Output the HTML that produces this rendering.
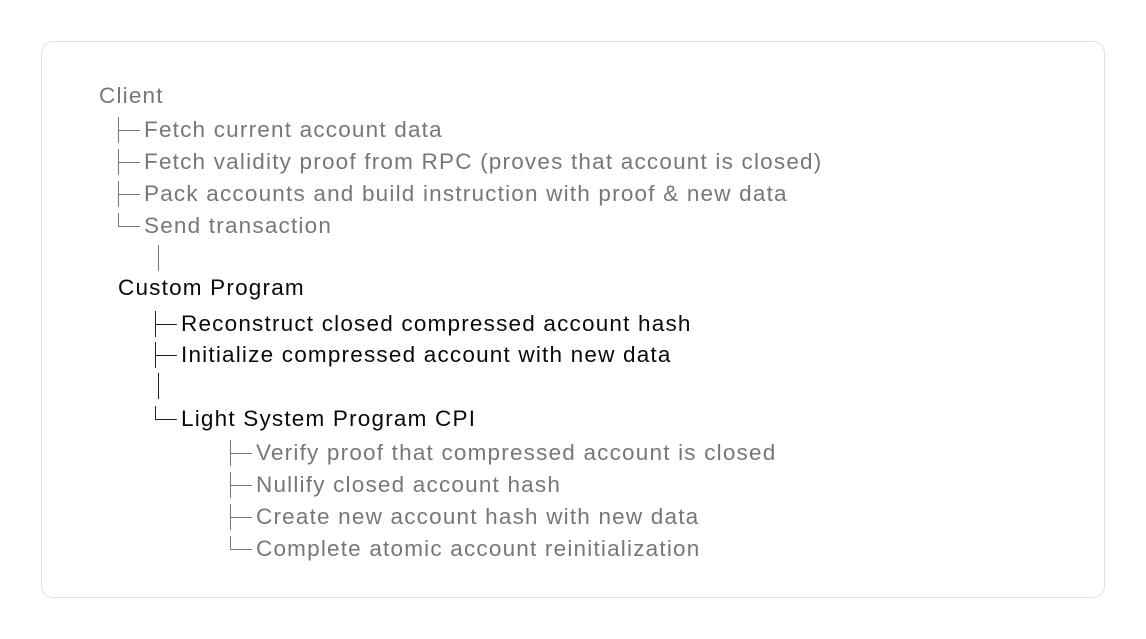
<!DOCTYPE html>
<html><head><meta charset="utf-8"><style>
html,body{margin:0;padding:0;background:#fff;width:1146px;height:639px;overflow:hidden}
.box{position:absolute;left:41px;top:41px;width:1062px;height:555px;border:1px solid #e2e2e2;border-radius:12px}
.r{position:absolute;height:32px;line-height:32px;font-family:"Liberation Sans",sans-serif;font-size:22.5px;letter-spacing:1.2px;white-space:nowrap;color:#777}
.k{color:#0a0a0a}
.g{position:absolute;width:20px;height:32px}
.g .v{position:absolute;left:0;top:3px;width:1.3px;height:26px;background:#777}
.g .h{position:absolute;left:0;top:15.5px;width:22px;height:1.3px;background:#777}
.g.l .v{height:13.5px}
.k .g .v,.k .g .h{background:#222}
</style></head><body>
<div class="box"></div>
<div class="r" style="left:99px;top:80px">Client</div>

<div class="r" style="left:118px;top:114px"><span class="g"><i class="v"></i><i class="h"></i></span><span style="margin-left:26px">Fetch current account data</span></div>
<div class="r" style="left:118px;top:146px"><span class="g"><i class="v"></i><i class="h"></i></span><span style="margin-left:26px">Fetch validity proof from RPC (proves that account is closed)</span></div>
<div class="r" style="left:118px;top:178px"><span class="g"><i class="v"></i><i class="h"></i></span><span style="margin-left:26px">Pack accounts and build instruction with proof &amp; new data</span></div>
<div class="r" style="left:118px;top:210px"><span class="g l"><i class="v"></i><i class="h"></i></span><span style="margin-left:26px">Send transaction</span></div>
<div class="r" style="left:158px;top:242px"><span class="g"><i class="v"></i></span></div>

<div class="r k" style="left:118px;top:272px">Custom Program</div>
<div class="r k" style="left:155px;top:308px"><span class="g"><i class="v"></i><i class="h"></i></span><span style="margin-left:26px">Reconstruct closed compressed account hash</span></div>
<div class="r k" style="left:155px;top:339px"><span class="g"><i class="v"></i><i class="h"></i></span><span style="margin-left:26px">Initialize compressed account with new data</span></div>
<div class="r k" style="left:158px;top:370px"><span class="g"><i class="v"></i></span></div>
<div class="r k" style="left:155px;top:403px"><span class="g l"><i class="v"></i><i class="h"></i></span><span style="margin-left:26px">Light System Program CPI</span></div>

<div class="r" style="left:230px;top:437px"><span class="g"><i class="v"></i><i class="h"></i></span><span style="margin-left:26px">Verify proof that compressed account is closed</span></div>
<div class="r" style="left:230px;top:469px"><span class="g"><i class="v"></i><i class="h"></i></span><span style="margin-left:26px">Nullify closed account hash</span></div>
<div class="r" style="left:230px;top:501px"><span class="g"><i class="v"></i><i class="h"></i></span><span style="margin-left:26px">Create new account hash with new data</span></div>
<div class="r" style="left:230px;top:533px"><span class="g l"><i class="v"></i><i class="h"></i></span><span style="margin-left:26px">Complete atomic account reinitialization</span></div>
</body></html>
